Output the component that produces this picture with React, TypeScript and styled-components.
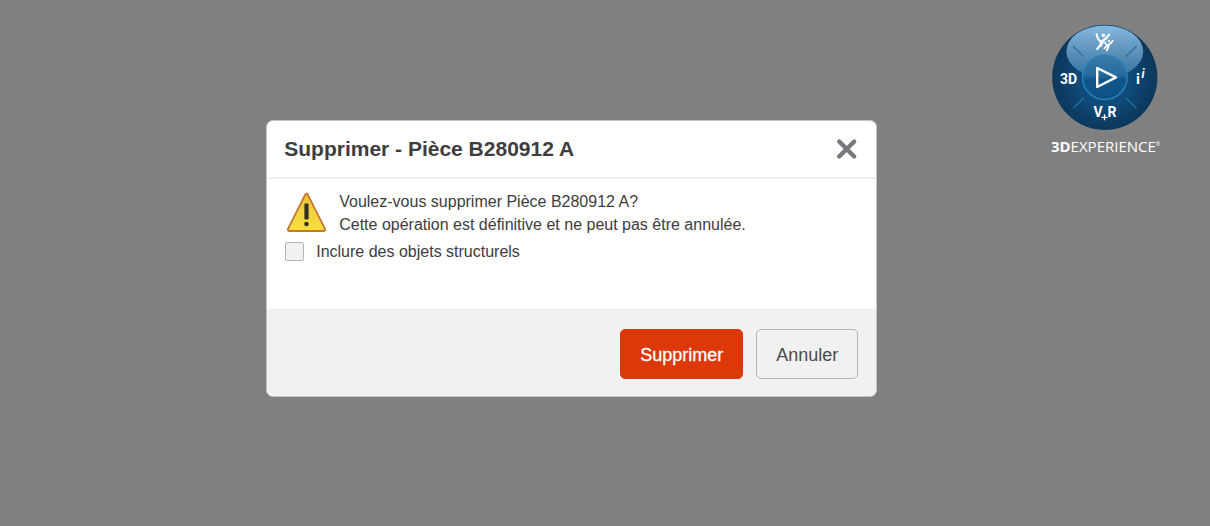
import React from 'react';
import styled, { createGlobalStyle, css } from 'styled-components';

const GlobalStyle = createGlobalStyle`
  *, *::before, *::after { box-sizing: border-box; }
  body {
    margin: 0;
    background: #808080;
    color: #3d3d3d;
    font-family: Arial, "Liberation Sans", sans-serif;
  }
`;

const Backdrop = styled.main`
  display: grid;
  grid-template-columns: 4fr minmax(0, 611px) 5fr;
  min-height: 100vh;
`;

const Dialog = styled.section`
  grid-column: 2;
  align-self: center;
  margin-bottom: 9px;
  background: #fff;
  border: 1px solid #c4c4c4;
  border-radius: 7px;
  overflow: hidden;
`;

const DialogHeader = styled.header`
  display: flex;
  align-items: center;
  justify-content: space-between;
  height: 58px;
  padding: 0 18px 0 17px;
  border-bottom: 2px solid #eeefef;
`;

const Title = styled.h1`
  margin: 0;
  font-size: 21px;
  line-height: 28px;
  font-weight: 700;
`;

const CloseButton = styled.button`
  display: flex;
  padding: 0;
  border: 0;
  background: none;
  cursor: pointer;
`;

const DialogBody = styled.div`
  min-height: 130px;
  padding: 11px 18px;
`;

const Warning = styled.div`
  display: flex;
  align-items: center;
  gap: 11px;
`;

const Message = styled.p`
  margin: 0;
  font-size: 16px;
  line-height: 23px;
`;

const Option = styled.label`
  display: flex;
  align-items: center;
  gap: 12px;
  margin-top: 4px;
  font-size: 16px;
  line-height: 23px;
`;

const Checkbox = styled.input`
  appearance: none;
  width: 19px;
  height: 19px;
  margin: 0;
  border: 1px solid #b4b6ba;
  border-radius: 2px;
  background: #f1f1f1;
  &:checked { background: #368ec4; }
`;

const DialogFooter = styled.footer`
  display: flex;
  justify-content: flex-end;
  gap: 13px;
  padding: 19px 18px 17px;
  background: #f1f1f1;
  border-top: 1px solid #ececec;
`;

const Button = styled.button<{ $danger?: boolean }>`
  height: 50px;
  padding: 2px 19px 0;
  border: 1px solid #b4b6ba;
  border-radius: 5px;
  background: #f1f1f1;
  color: #4a4a4a;
  font: 18px/24px Arial, "Liberation Sans", sans-serif;
  cursor: pointer;
  ${({ $danger }) => $danger && css`
    border-color: #dd3809;
    background: #dd3809;
    color: #fff;
    -webkit-text-stroke: 0.3px #fff;
  `}
`;

const Brand = styled.aside`
  grid-column: 3;
  justify-self: end;
  display: flex;
  flex-direction: column;
  align-items: center;
  padding: 24px 50px 0 0;
`;

const BrandName = styled.p`
  margin: 4px 0 0;
  color: #fff;
  font: 15px/22px "Open Sans", sans-serif;
  white-space: nowrap;
`;

const Registered = styled.sup`
  font-size: 5px;
  line-height: 0;
  vertical-align: 6px;
`;

function CloseIcon() {
  return (
    <svg width="22" height="22" viewBox="0 0 22 22" aria-hidden="true">
      <path d="M3.2 3.5 18.2 18.5M18.2 3.5 3.2 18.5" stroke="#77797c" strokeWidth="4.4" strokeLinecap="round" />
    </svg>
  );
}

function WarningIcon() {
  return (
    <svg width="43" height="43" viewBox="0 1 43 43" aria-hidden="true">
      <defs>
        <linearGradient id="warn" x1="0" y1="0" x2="0" y2="1">
          <stop offset="0" stopColor="#e8bd35" />
          <stop offset="0.5" stopColor="#f3d33f" />
          <stop offset="1" stopColor="#f7df3e" />
        </linearGradient>
      </defs>
      <path d="M20.2 3.6Q21.5 1.6 22.8 3.6L40 37.8Q40.6 40 38.6 40H4.4Q2.4 40 3 37.8Z" fill="url(#warn)" stroke="#c4762f" strokeWidth="1.8" strokeLinejoin="round" />
      <rect x="19.4" y="12.5" width="4.2" height="16" rx="1" fill="#302f22" />
      <circle cx="21.5" cy="33" r="2.3" fill="#302f22" />
    </svg>
  );
}

function Compass() {
  return (
    <svg width="108" height="107" viewBox="11 9 108 107" role="img" aria-label="3DEXPERIENCE">
      <defs>
        <radialGradient id="disc" cx="0.5" cy="0.52" r="0.52">
          <stop offset="0" stopColor="#11578a" />
          <stop offset="0.5" stopColor="#0f4a79" />
          <stop offset="0.8" stopColor="#0d3c63" />
          <stop offset="1" stopColor="#0c3759" />
        </radialGradient>
        <linearGradient id="gloss" x1="0" y1="0" x2="0" y2="1">
          <stop offset="0" stopColor="#84b9e2" />
          <stop offset="0.4" stopColor="#6699c0" />
          <stop offset="1" stopColor="#34729f" />
        </linearGradient>
        <linearGradient id="hub" x1="0" y1="0" x2="0" y2="1">
          <stop offset="0" stopColor="#3c7ba8" />
          <stop offset="0.45" stopColor="#246b9d" />
          <stop offset="0.55" stopColor="#0f568a" />
          <stop offset="1" stopColor="#105285" />
        </linearGradient>
      </defs>
      <circle cx="64.8" cy="62.4" r="52.6" fill="url(#disc)" />
      <ellipse cx="64.8" cy="36.5" rx="38.4" ry="26" fill="url(#gloss)" />
      <circle cx="64.8" cy="62.2" r="22.3" fill="url(#hub)" stroke="#2b83be" strokeWidth="1.4" />
      <path d="M33 31 43.6 41.6M96.6 31 86 41.6" stroke="#286b9d" strokeWidth="1.1" />
      <path d="M43.6 83 33 93.6M86 83 96.6 93.6" stroke="#2878ad" strokeWidth="1.1" />
      <path d="M57.2 53 76 62.4 57.2 72Z" fill="none" stroke="#fff" strokeWidth="2.4" strokeLinejoin="round" />
      <g fill="none" stroke="#fff" strokeLinecap="round" strokeLinejoin="round">
        <path d="M56.6 19.4Q57.8 25 60.6 26.4Q65.6 25 69 19.6M61.4 26.4Q60.6 30.6 57.2 34M63.6 25.4 60.8 31" strokeWidth="2.1" />
        <path d="M65 27.4Q65.6 30 67.6 30.4Q71 28.8 72.8 25.8M68.6 30Q68.6 32.6 66.8 35.4M67.4 30.4 64.4 33.4" strokeWidth="1.8" />
      </g>
      <circle cx="63.4" cy="20.4" r="1.8" fill="#fff" />
      <circle cx="69" cy="26" r="1.2" fill="#fff" />
      <g fill="#fff" fontFamily='Roboto, "Liberation Sans", sans-serif' fontWeight="700">
        <text x="20" y="68.5" fontSize="14">3D</text>
        <text x="53.4" y="102.4" fontSize="14">V</text>
        <text x="67.4" y="102.4" fontSize="14">R</text>
        <text x="96" y="69" fontSize="15">i</text>
        <text x="101.4" y="62.5" fontSize="12" fontStyle="italic">i</text>
      </g>
      <path d="M64.5 99.3V105.3M61.5 102.3H67.5" stroke="#fff" strokeWidth="1.3" />
    </svg>
  );
}

export default function App() {
  return (
    <>
      <GlobalStyle />
      <Backdrop>
        <Dialog role="dialog" aria-modal="true" aria-labelledby="dialog-title">
          <DialogHeader>
            <Title id="dialog-title">Supprimer - Pièce B280912 A</Title>
            <CloseButton type="button" aria-label="Fermer"><CloseIcon /></CloseButton>
          </DialogHeader>
          <DialogBody>
            <Warning>
              <WarningIcon />
              <Message>
                Voulez-vous supprimer Pièce B280912 A?<br />
                Cette opération est définitive et ne peut pas être annulée.
              </Message>
            </Warning>
            <Option htmlFor="structural">
              <Checkbox id="structural" type="checkbox" />
              Inclure des objets structurels
            </Option>
          </DialogBody>
          <DialogFooter>
            <Button type="button" $danger>Supprimer</Button>
            <Button type="button">Annuler</Button>
          </DialogFooter>
        </Dialog>
        <Brand>
          <Compass />
          <BrandName><b>3D</b>EXPERIENCE<Registered>®</Registered></BrandName>
        </Brand>
      </Backdrop>
    </>
  );
}
